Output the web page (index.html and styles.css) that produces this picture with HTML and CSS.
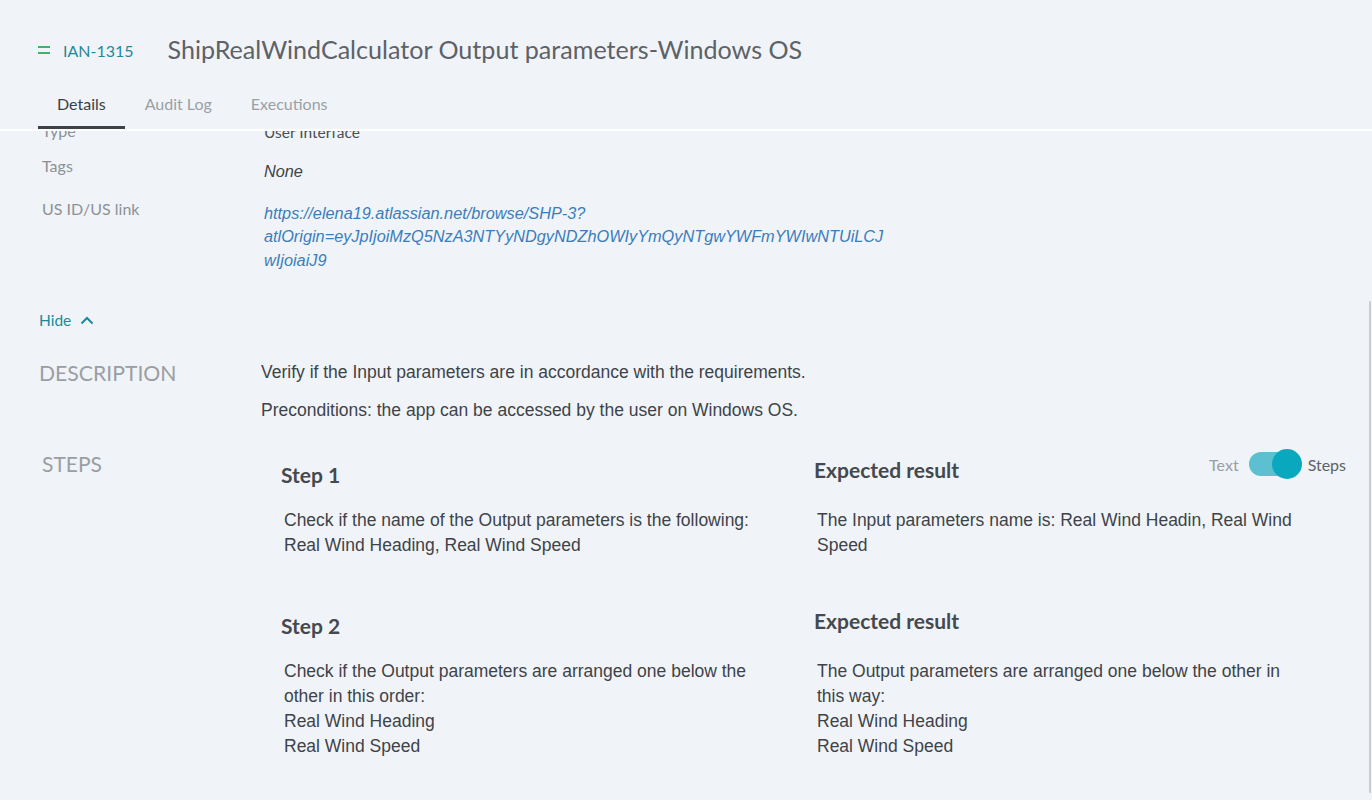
FILE: index.html
```html
<!DOCTYPE html>
<html>
<head>
<meta charset="utf-8">
<link rel="stylesheet" href="styles.css">
</head>
<body>
<div class="page">
  <header class="header">
    <div class="title-row">
      <span class="prio"><i></i><i></i></span>
      <span class="key">IAN-1315</span>
      <h1 class="title">ShipRealWindCalculator Output parameters-Windows OS</h1>
    </div>
    <nav class="tabs">
      <span class="tab active">Details</span>
      <span class="tab">Audit Log</span>
      <span class="tab">Executions</span>
    </nav>
  </header>
  <main class="content">
    <div class="scroll-inner">
      <div class="field field-type">
        <div class="label">Type</div>
        <div class="value plain">User Interface</div>
      </div>
      <div class="field field-tags">
        <div class="label">Tags</div>
        <div class="value italic">None</div>
      </div>
      <div class="field field-link">
        <div class="label">US ID/US link</div>
        <div class="value link">https://elena19.atlassian.net/browse/SHP-3?<br>atlOrigin=eyJpIjoiMzQ5NzA3NTYyNDgyNDZhOWIyYmQyNTgwYWFmYWIwNTUiLCJ<br>wIjoiaiJ9</div>
      </div>
      <div class="hide"><span>Hide</span><svg width="14" height="9" viewBox="0 0 14 9"><path d="M1.5 7.5 L7 2 L12.5 7.5" fill="none" stroke="#1a8a9a" stroke-width="2"/></svg></div>
      <section class="desc">
        <h2 class="sec-label">DESCRIPTION</h2>
        <div class="desc-text">
          <p>Verify if the Input parameters are in accordance with the requirements.</p>
          <p>Preconditions: the app can be accessed by the user on Windows OS.</p>
        </div>
      </section>
      <section class="steps">
        <h2 class="sec-label steps-label">STEPS</h2>
        <div class="step-list">
          <div class="step">
            <div class="col">
              <h3 class="step-h">Step 1</h3>
              <div class="step-text">Check if the name of the Output parameters is the following: Real Wind Heading, Real Wind Speed</div>
            </div>
            <div class="col">
              <h3 class="exp-h">Expected result</h3>
              <div class="step-text">The Input parameters name is: Real Wind Headin, Real Wind Speed</div>
            </div>
          </div>
          <div class="step">
            <div class="col">
              <h3 class="step-h">Step 2</h3>
              <div class="step-text">Check if the Output parameters are arranged one below the other in this order:<br>Real Wind Heading<br>Real Wind Speed</div>
            </div>
            <div class="col">
              <h3 class="exp-h">Expected result</h3>
              <div class="step-text">The Output parameters are arranged one below the other in this way:<br>Real Wind Heading<br>Real Wind Speed</div>
            </div>
          </div>
        </div>
        <div class="toggle">
          <span class="t-off">Text</span>
          <span class="switch"><span class="knob"></span></span>
          <span class="t-on">Steps</span>
        </div>
      </section>
    </div>
    <div class="scrollbar"></div>
  </main>
</div>
</body>
</html>
```
FILE: styles.css
```css
* { box-sizing: border-box; }
html, body { margin: 0; padding: 0; }
body {
  background: #f0f4f8;
  font-family: Lato, "Liberation Sans", Arial, sans-serif;
  width: 1372px;
  height: 800px;
  overflow: hidden;
}
.page { height: 800px; display: flex; flex-direction: column; }
.header {
  padding: 34px 0 0 38px;
  border-bottom: 2px solid #ffffff;
  flex: none;
}
.title-row { display: flex; align-items: center; height: 30px; }
.prio { display: flex; flex-direction: column; gap: 4px; width: 12px; margin-right: 13px; margin-top: 2px; }
.prio i { display: block; height: 2px; background: #3db36b; }
.key { color: #1f8a99; font-size: 16px; margin-right: 34px; margin-top: 2px; }
.title {
  margin: 0;
  font-weight: 400;
  font-size: 25.1px;
  color: #5d6268;
  line-height: 30px;
}
.tabs { display: flex; margin-top: 18px; }
.tab {
  font-size: 16px;
  line-height: 20px;
  padding: 12px 19px 12px;
  color: #9aa0a6;
  border-bottom: 3px solid transparent;
}
.tab:nth-child(2), .tab:nth-child(3) { margin-left: 1px; }
.tab.active { color: #3a3f45; border-bottom-color: #3d4248; }

.content { flex: 1; overflow: hidden; position: relative; }
.scroll-inner { margin-top: -10px; padding-left: 42px; }
.field { display: grid; grid-template-columns: 222px 1fr; }
.label { font-size: 16px; line-height: 20px; color: #8c9197; }
.value { padding-top: 2px; }
.value.plain { font-size: 15.5px; line-height: 20px; color: #4a4f55; padding-top: 1px; }
.value.italic { font-family: "Liberation Sans", Arial, sans-serif; font-style: italic; font-size: 16.3px; line-height: 24px; color: #3e4348; padding-top: 3px; }
.value.link { font-family: "Liberation Sans", Arial, sans-serif; font-style: italic; font-size: 16.3px; line-height: 23.5px; color: #3a7dbd; padding-top: 2.5px; }
.field-type { height: 35px; }
.field-tags { height: 43px; }
.field-link { height: 111px; }
.hide { display: flex; align-items: center; gap: 9px; color: #1a8a9a; font-size: 15.5px; line-height: 20px; margin-left: -3px; }
.hide svg { margin-top: 1px; }

.desc { display: grid; grid-template-columns: 222px 1fr; margin-top: 31px; margin-left: -3px; }
.sec-label { margin: 0; font-weight: 400; font-size: 21.2px; line-height: 24px; color: #9a9ea3; }
.desc-text { font-family: "Liberation Sans", Arial, sans-serif; font-size: 17.5px; color: #3e4348; padding-top: 0; }
.desc-text p { margin: 0 0 16px; line-height: 22px; }

.steps { position: relative; display: grid; grid-template-columns: 239px 1fr; margin-top: 17px; }
.steps-label { font-size: 21px; line-height: 20px; }
.step { display: grid; grid-template-columns: 533px 490px; height: 151px; }
.step-h, .exp-h {
  margin: 0;
  font-size: 21px;
  font-weight: 700;
  line-height: 24px;
  color: #45494e;
}
.step-h { margin-top: 9px; margin-bottom: 20.5px; }
.exp-h { margin-top: 4px; margin-bottom: 25.5px; }
.step-text {
  font-family: "Liberation Sans", Arial, sans-serif;
  font-size: 17.5px;
  line-height: 25px;
  color: #3e4348;
  padding-left: 3px;
  max-width: 488px;
}
.toggle {
  position: absolute;
  right: 26px;
  top: -2px;
  display: flex;
  align-items: center;
  font-size: 16px;
}
.t-off { color: #9a9ea3; margin-right: 10px; }
.t-on { color: #5d6268; margin-left: 7px; }
.switch {
  position: relative;
  width: 52px;
  height: 24px;
  border-radius: 12px;
  background: #5cc0d0;
}
.knob {
  position: absolute;
  right: -1px;
  top: -3px;
  width: 30px;
  height: 30px;
  border-radius: 50%;
  background: #0aa8bf;
}
.scrollbar {
  position: absolute;
  right: 1px;
  top: 170px;
  width: 2px;
  height: 492px;
  border-radius: 1px;
  background: #c9cdd2;
}
```
